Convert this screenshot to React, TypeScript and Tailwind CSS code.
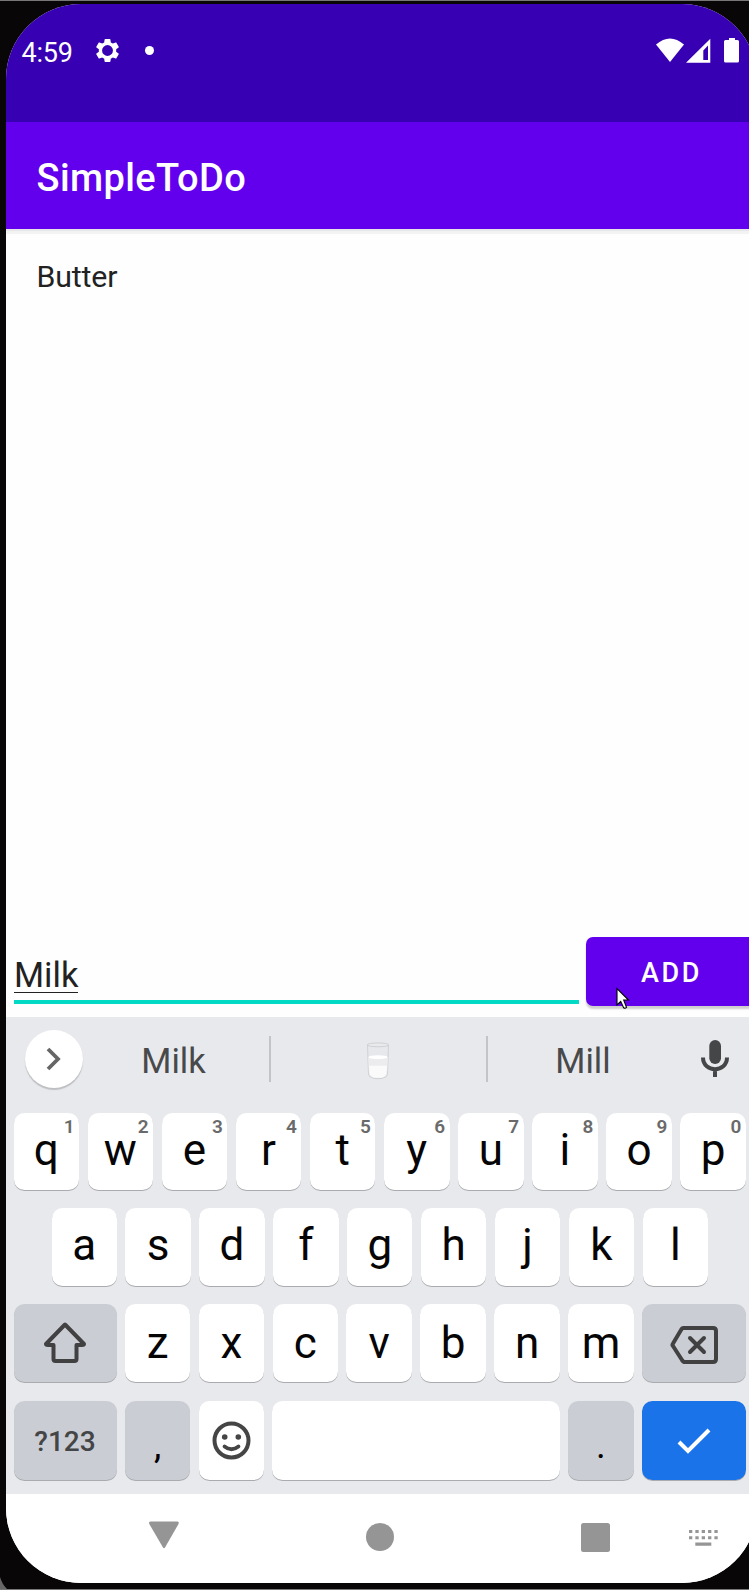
import type { ReactNode } from "react";

type KeyProps = { children?: ReactNode; tone?: string; size?: string };

function Key({ children, tone = "bg-white", size = "flex-1" }: KeyProps) {
  return (
    <div
      className={`relative flex h-full min-w-0 justify-center rounded-[10.5px] shadow-[0_1px_0_#a9abae] ${tone} ${size}`}
    >
      {children}
    </div>
  );
}

function Letter({ char, hint, drop = "mt-[11px]" }: { char: string; hint?: string; drop?: string }) {
  return (
    <Key>
      <span className={`text-[44px] leading-[52px] text-[#050505] ${drop}`}>{char}</span>
      {hint && (
        <span className="absolute right-[4.500px] top-[3px] text-[19px] font-semibold leading-[22px] text-[#6a6a6a]">
          {hint}
        </span>
      )}
    </Key>
  );
}

function StatusBar() {
  return (
    <div className="flex h-[118px] items-start bg-[#3700b3] pl-[15.5px] text-white">
      <span className="mt-[33px] w-[52.5px] text-[27px] leading-[32px] tracking-[-0.2px]">4:59</span>
      <svg className="ml-[19px] mt-[32px] h-[29px] w-[29px]" viewBox="0 0 24 24" fill="currentColor">
        <path d="M19.14 12.94c.04-.3.06-.61.06-.94 0-.32-.02-.64-.07-.94l2.03-1.58c.18-.14.23-.41.12-.61l-1.92-3.32c-.12-.22-.37-.29-.59-.22l-2.39.96c-.5-.38-1.03-.7-1.62-.94l-.36-2.54c-.04-.24-.24-.41-.48-.41h-3.84c-.24 0-.43.17-.47.41l-.36 2.54c-.59.24-1.13.57-1.62.94l-2.39-.96c-.22-.08-.47 0-.59.22L2.74 8.87c-.12.21-.08.47.12.61l2.03 1.58c-.05.3-.09.63-.09.94s.02.64.07.94l-2.03 1.58c-.18.14-.23.41-.12.61l1.92 3.32c.12.22.37.29.59.22l2.39-.96c.5.38 1.03.7 1.62.94l.36 2.54c.05.24.24.41.48.41h3.84c.24 0 .44-.17.47-.41l.36-2.54c.59-.24 1.13-.56 1.62-.94l2.39.96c.22.08.47 0 .59-.22l1.92-3.32c.12-.22.07-.47-.12-.61l-2.01-1.58zM12 16.5A4.5 4.5 0 0 1 7.5 12 4.5 4.5 0 0 1 12 7.5a4.5 4.5 0 0 1 4.500 4.500A4.500 4.500 0 0 1 12 16.500z" />
      </svg>
      <span className="ml-[23px] mt-[42px] h-[9px] w-[9px] rounded-full bg-white" />
      <svg className="ml-auto mr-[17px] mt-[34px] h-[26px] w-[84px]" viewBox="0 0 84 26" fill="currentColor">
        <path d="M0 6.500Q14-5.500 28 6.500L14 24z" />
        <path fillRule="evenodd" d="M30 24.800L54.300.800V24.800zM47.300 12.500V22H52V7.500z" />
        <path d="M73 0h6v2h2.500q1.500 0 1.500 1.500v19.500q0 1.500-1.500 1.500h-12q-1.500 0-1.500-1.500V3.500q0-1.500 1.500-1.500H73z" />
      </svg>
    </div>
  );
}

function EntryBar() {
  return (
    <div className="flex h-[81px] items-start pl-2">
      <div className="mt-[3px] h-[65px] w-[565px] shrink-0 border-b-4 border-[#03dac5] pt-[20px]">
        <span className="inline-block h-[34px] border-b-[1.500px] border-[#222] text-[34.500px] leading-[33px] text-[#222]">
          Milk
        </span>
      </div>
      <button className="relative ml-[7px] mt-[1px] h-[69px] w-[172px] shrink-0 rounded-[7px] bg-[#6200ee] text-[27px] font-medium leading-[72px] tracking-[2.600px] text-white shadow-[0_3px_2px_#cfcfcf]">
        <span className="-ml-[1px]">ADD</span>
        <svg className="absolute left-[30px] top-[50px] h-[23px] w-[14px]" viewBox="0 0 14 23">
          <path
            d="M1 1.500V18L4.700 14.500L7.500 20.500Q9 22 10.500 20.300L7.700 13H12.500z"
            fill="#fff"
            stroke="#000"
            strokeWidth="1.100"
          />
        </svg>
      </button>
    </div>
  );
}

function Suggestions() {
  return (
    <div className="flex h-[96px] items-start pl-[19px] text-[34.500px] leading-[40px] text-[#48494b]">
      <div className="mt-[12.500px] flex h-[58px] w-[58px] shrink-0 items-center justify-center rounded-full bg-white shadow-[0_2px_1px_#bdbec1]">
        <svg className="h-6 w-4" viewBox="0 0 16 24" fill="none" stroke="#666" strokeWidth="3.800">
          <path d="M2 2L12 12L2 22" />
        </svg>
      </div>
      <div className="mt-[24px] w-[186px] shrink-0 pr-[5px] text-center">Milk</div>
      <div className="mt-[19px] h-[46px] w-[2px] shrink-0 bg-[#c3c4c7]" />
      <div className="mt-[25px] flex w-[215px] shrink-0 justify-center">
        <svg className="-ml-[1px] h-[38px] w-6" viewBox="0 0 24 40" preserveAspectRatio="none">
          <path d="M1.500 3L2.500 34Q3 37 7 38Q12 39.500 17 38Q21 37 21.500 34L22.500 3" fill="#e7e8eb" stroke="#cfd0d3" />
          <path d="M2 16L3 33Q3.500 36 7 37Q12 38.500 17 37Q20.500 36 21 33L22 16z" fill="#ececef" />
          <path d="M3 25L3.500 33Q4 36 7 37Q12 38.500 17 37Q20 36 20.500 33L21 25z" fill="#fafafa" />
          <ellipse cx="12" cy="16" rx="9.500" ry="2" fill="#fff" />
          <ellipse cx="12" cy="3" rx="10.800" ry="2" fill="#e9eaec" stroke="#cfd0d3" />
        </svg>
      </div>
      <div className="mt-[19px] h-[46px] w-[2px] shrink-0 bg-[#c3c4c7]" />
      <div className="mt-[24px] w-[190px] shrink-0 text-center">Mill</div>
      <svg className="ml-[23px] mt-[23px] h-[38px] w-[28px] shrink-0" viewBox="0 0 28 38">
        <rect x="8.300" y="0" width="11.700" height="24" rx="5.800" fill="#454648" />
        <path d="M2 17.500C2 33 26 33 26 17.500M14 29V37" fill="none" stroke="#454648" strokeWidth="4" />
      </svg>
    </div>
  );
}

function Keyboard() {
  return (
    <div className="h-[477px] bg-[#e8e9ed]">
      <Suggestions />
      <div className="flex h-[77px] w-[740px] gap-[8.500px] pl-[7.500px]">
        {[..."qwertyuiop"].map((c, i) => (
          <Letter key={c} char={c} hint={String((i + 1) % 10)} />
        ))}
      </div>
      <div className="mt-[18px] flex h-[78px] w-[702px] gap-[8.500px] pl-[45.500px]">
        {[..."asdfghjkl"].map((c) => (
          <Letter key={c} char={c} />
        ))}
      </div>
      <div className="mt-[18px] flex h-[78px] w-[740px] gap-[8.300px] pl-[7.500px]">
        <Key tone="bg-[#cbcdd5]" size="w-[103px]">
          <svg className="mt-[17px] h-[43px] w-[44px]" viewBox="0 0 44 43" fill="none" stroke="#414141" strokeWidth="4" strokeLinejoin="round">
            <path d="M22 3.500L41 23Q41 24 39 24H33.500V38Q33.500 40 31.500 40H12.500Q10.500 40 10.500 38V24H5Q3 24 3 23z" />
          </svg>
        </Key>
        {[..."zxcvbnm"].map((c) => (
          <Letter key={c} char={c} drop="mt-[13px]" />
        ))}
        <Key tone="bg-[#cbcdd5]" size="w-[104px]">
          <svg className="mt-[21px] h-[40px] w-[49px]" viewBox="0 0 49 40" fill="none" stroke="#414141" strokeWidth="4" strokeLinejoin="round">
            <path d="M13 3H43Q46 3 46 6V34Q46 37 43 37H15Q13 37 12 35L3 21Q2 20 3 18.500L11 5Q12 3 13 3z" />
            <path d="M20 13L34 27M34 13L20 27" strokeLinecap="round" />
          </svg>
        </Key>
      </div>
      <div className="mt-[19px] flex h-[79px] w-[740px] gap-[8.300px] pl-[7.500px]">
        <Key tone="bg-[#cbcdd5]" size="w-[103px]">
          <span className="mt-[24px] text-[28px] font-medium leading-[33px] text-[#444547]">?123</span>
        </Key>
        <Key tone="bg-[#cbcdd5]" size="w-[65.500px]">
          <span className="mt-[25px] text-[37px] leading-[40px] text-black">,</span>
        </Key>
        <Key size="w-[65.500px]">
          <svg className="mt-[20px] h-[39px] w-[39px]" viewBox="0 0 39 39" fill="none" stroke="#454545" strokeWidth="4">
            <circle cx="19.500" cy="19.500" r="17" />
            <circle cx="12.700" cy="16" r="2.800" fill="#454545" stroke="none" />
            <circle cx="26.300" cy="16" r="2.800" fill="#454545" stroke="none" />
            <path d="M12.500 25.500Q19.500 31 26.500 25.500" strokeWidth="3.700" strokeLinecap="round" />
          </svg>
        </Key>
        <Key />
        <Key tone="bg-[#cbcdd5]" size="w-[65.500px]">
          <span className="mt-[25px] text-[37px] leading-[40px] text-black">.</span>
        </Key>
        <Key tone="bg-[#1a73e8]" size="w-[104px]">
          <svg className="mt-[27px] h-[26px] w-[34px]" viewBox="0 0 34 26" fill="none" stroke="#fff" strokeWidth="4">
            <path d="M2 14L11 23L32 2" />
          </svg>
        </Key>
      </div>
    </div>
  );
}

function NavBar() {
  const columns = [0, 1, 2, 3, 4];
  return (
    <div className="flex h-[89px] items-start bg-white">
      <svg className="ml-[142px] mt-[27px] h-[28px] w-[32px]" viewBox="0 0 32 28" fill="#959595">
        <path d="M3 .500H29Q31.500.500 30.500 3L17 26.500Q16 28 15 26.500L1.300 3Q.300.500 3 .500z" />
      </svg>
      <span className="ml-[186px] mt-[29px] h-[28px] w-[28px] rounded-full bg-[#959595]" />
      <span className="ml-[187px] mt-[29px] h-[29px] w-[29px] rounded-[2.500px] bg-[#959595]" />
      <svg className="ml-[79px] mt-[36px] h-[16px] w-[30px]" viewBox="0 0 30 16" fill="#959595">
        {columns.map((c) => (
          <path key={c} d={`M${c * 6.35} 0h3.300v3h-3.300zM${c * 6.35} 6.300h3.300v3h-3.300z`} />
        ))}
        <path d="M6.300 12.500h16v3.300h-16z" />
      </svg>
    </div>
  );
}

export default function App() {
  return (
    <div className="relative h-[1590px] w-full overflow-hidden border-y border-[#777] bg-[#080607] pl-[6px] pt-[3px] font-['Roboto',sans-serif]">
      <svg className="absolute bottom-0 left-0 h-[14px] w-[9px]" viewBox="0 0 9 14">
        <path d="M0 2Q2 9 7 14H0z" fill="#666" />
      </svg>
      <div className="flex h-[1579px] w-[751px] flex-col overflow-hidden rounded-[75px] bg-[#fefefe]">
        <StatusBar />
        <header className="relative h-[107px] shrink-0 bg-[#6200ee] pl-[30.500px] pt-[34px] text-[38px] font-medium leading-[45px] tracking-[0.400px] text-white shadow-[0_2px_0_#e7e7e9,0_5px_0_#f3f3f3]">
          SimpleToDo
        </header>
        <main className="flex-1 pl-[30.500px] pt-[29.500px] text-[30.300px] leading-[36px] tracking-[-0.150px] text-[#222]">Butter</main>
        <EntryBar />
        <Keyboard />
        <NavBar />
      </div>
    </div>
  );
}
